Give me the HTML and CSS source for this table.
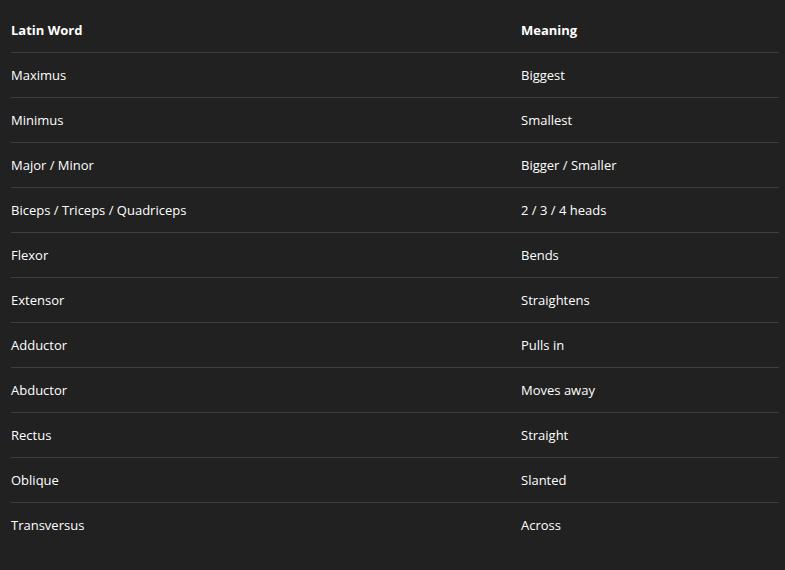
FILE: index.html
```html
<!DOCTYPE html>
<html>
<head>
<meta charset="utf-8">
<link rel="stylesheet" href="styles.css">
</head>
<body>
<table class="words">
<thead>
<tr><th>Latin Word</th><th>Meaning</th></tr>
</thead>
<tbody>
<tr><td>Maximus</td><td>Biggest</td></tr>
<tr><td>Minimus</td><td>Smallest</td></tr>
<tr><td>Major / Minor</td><td>Bigger / Smaller</td></tr>
<tr><td>Biceps / Triceps / Quadriceps</td><td>2 / 3 / 4 heads</td></tr>
<tr><td>Flexor</td><td>Bends</td></tr>
<tr><td>Extensor</td><td>Straightens</td></tr>
<tr><td>Adductor</td><td>Pulls in</td></tr>
<tr><td>Abductor</td><td>Moves away</td></tr>
<tr><td>Rectus</td><td>Straight</td></tr>
<tr><td>Oblique</td><td>Slanted</td></tr>
<tr><td>Transversus</td><td>Across</td></tr>
</tbody>
</table>
</body>
</html>
```
FILE: styles.css
```css
html, body {
  margin: 0;
  background: #212121;
}
body {
  padding: 8px 6px 0 11px;
  font-family: "Open Sans", "Noto Sans", sans-serif;
  font-size: 13px;
  color: #ffffff;
}
.words {
  width: 768px;
  border-collapse: collapse;
}
.words th,
.words td {
  height: 44px;
  padding: 0;
  text-align: left;
  vertical-align: middle;
}
.words th {
  font-weight: 700;
}
.words th:first-child,
.words td:first-child {
  width: 510px;
}
.words thead tr,
.words tbody tr {
  border-bottom: 1px solid #3e3e3e;
}
.words tbody tr:last-child {
  border-bottom: none;
}
```
